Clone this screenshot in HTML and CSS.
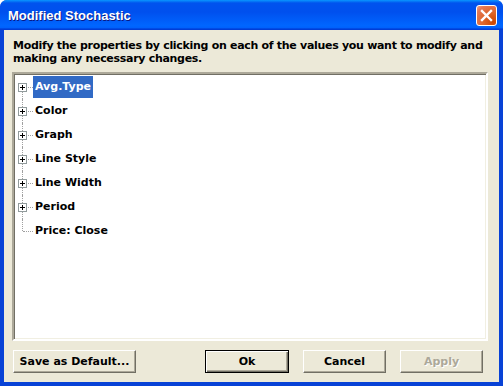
FILE: index.html
```html
<!DOCTYPE html>
<html>
<head>
<meta charset="utf-8">
<link rel="stylesheet" href="styles.css">
</head>
<body>
<div class="window">
  <div class="titlebar">
    <span class="title">Modified Stochastic</span>
    <span class="close"><svg width="13" height="13" viewBox="0 0 13 13"><path d="M2 2 L11 11 M11 2 L2 11" stroke="#fff" stroke-width="2.4" stroke-linecap="square"/></svg></span>
  </div>
  <div class="body">
    <p class="msg">Modify the properties by clicking on each of the values you want to modify and making any necessary changes.</p>
    <div class="tree">
      <ul>
        <li class="first"><span class="gutter"><span class="box"></span></span><span class="label sel">Avg.Type</span></li>
        <li><span class="gutter"><span class="box"></span></span><span class="label">Color</span></li>
        <li><span class="gutter"><span class="box"></span></span><span class="label">Graph</span></li>
        <li><span class="gutter"><span class="box"></span></span><span class="label">Line Style</span></li>
        <li><span class="gutter"><span class="box"></span></span><span class="label">Line Width</span></li>
        <li><span class="gutter"><span class="box"></span></span><span class="label">Period</span></li>
        <li class="last"><span class="gutter"></span><span class="label">Price: Close</span></li>
      </ul>
    </div>
    <div class="buttons">
      <button class="btn save">Save as Default...</button>
      <span class="spacer"></span>
      <button class="btn ok">Ok</button>
      <button class="btn cancel">Cancel</button>
      <button class="btn apply" disabled>Apply</button>
    </div>
  </div>
</div>
</body>
</html>
```
FILE: styles.css
```css
* { box-sizing: border-box; }
html, body { margin: 0; padding: 0; background: #fff; }
body { font-family: "DejaVu Sans", "Liberation Sans", sans-serif; }

.window {
  width: 503px;
  height: 386px;
  display: flex;
  flex-direction: column;
  background: #0842d6;
  border-radius: 7px 7px 0 0;
  overflow: hidden;
}

.titlebar {
  height: 30px;
  flex: none;
  display: flex;
  align-items: center;
  padding: 0 6px 0 8px;
  background: linear-gradient(to bottom, #0997ff 0, #0053ee 10%, #0050ee 40%, #0066ff 85%, #0062fc 92%, #003dd7 97%, #003dd7 100%);
}
.title {
  flex: 1;
  color: #fff;
  font-family: "Liberation Sans", "DejaVu Sans", sans-serif;
  font-weight: bold;
  font-size: 13px;
  text-shadow: 1px 1px 0 #0a1883;
  padding-top: 1px;
}
.close {
  width: 21px;
  height: 21px;
  border: 1px solid #fff;
  border-radius: 3px;
  background: radial-gradient(circle at 85% 85%, #cc4600 0, #dc6527 40%, #e57853 80%, #f2a08a 100%);
  display: flex;
  align-items: center;
  justify-content: center;
}
.close svg { display: block; }

.body {
  flex: 1;
  margin: 0 4px 4px 4px;
  background: #ece9d8;
  padding: 9px 11px 9px 8px;
  display: flex;
  flex-direction: column;
  font-weight: bold;
  font-size: 11px;
  color: #000;
}
.msg {
  margin: 0 -6px 7px 1px;
  line-height: 13px;
  height: 26px;
  letter-spacing: -0.3px;
}

.tree {
  height: 269px;
  flex: none;
  background: #fff;
  border-style: solid;
  border-width: 2px;
  border-color: #aca899 #fff #fff #aca899;
  box-shadow: inset 1px 1px 0 #716f64, inset -1px -1px 0 #f1efe2;
}
.tree ul {
  list-style: none;
  margin: 0;
  padding: 1px 0 0 0;
}
.tree li {
  height: 24px;
  display: flex;
  align-items: center;
}
.gutter {
  width: 19px;
  height: 24px;
  position: relative;
  flex: none;
}
.gutter::before {
  content: "";
  position: absolute;
  left: 8px;
  top: 0;
  bottom: 0;
  border-left: 1px dotted #a0a0a0;
}
.first .gutter::before { top: 12px; }
.last .gutter::before { bottom: 12px; }
.gutter::after {
  content: "";
  position: absolute;
  left: 9px;
  width: 10px;
  top: 12px;
  border-top: 1px dotted #a0a0a0;
}
.box {
  position: absolute;
  left: 4px;
  top: 8px;
  width: 9px;
  height: 9px;
  background: #fff;
  border: 1px solid #919b9c;
  z-index: 1;
}
.box::before {
  content: "";
  position: absolute;
  left: 1px;
  top: 3px;
  width: 5px;
  height: 1px;
  background: #000;
}
.box::after {
  content: "";
  position: absolute;
  left: 3px;
  top: 1px;
  width: 1px;
  height: 5px;
  background: #000;
}
.label {
  padding: 3px 2px;
  line-height: 16px;
}
.label.sel {
  background: #316ac5;
  color: #fff;
}

.buttons {
  margin-top: auto;
  margin-right: 5px;
  display: flex;
  align-items: center;
}
.btn {
  font-family: inherit;
  font-weight: bold;
  font-size: 11px;
  height: 23px;
  background: #ece9d8;
  color: #000;
  border-style: solid;
  border-width: 1px;
  border-color: #fff #716f64 #716f64 #fff;
  box-shadow: inset -1px -1px 0 #aca899;
  padding: 0;
  margin: 0;
}
.save { width: 123px; margin-left: 1px; }
.spacer { flex: 1; }
.ok {
  width: 84px;
  border: 1px solid #000;
  box-shadow: inset 1px 1px 0 #fff, inset -1px -1px 0 #716f64, inset -2px -2px 0 #aca899;
}
.cancel { width: 83px; margin-left: 14px; }
.apply { width: 83px; margin-left: 14px; color: #aca899; text-shadow: 1px 1px 0 #fff; }
```
